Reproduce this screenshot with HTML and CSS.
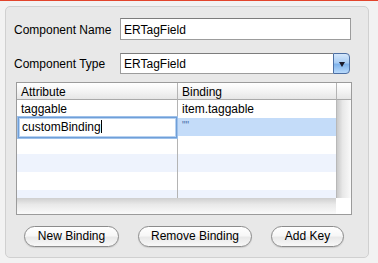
FILE: index.html
```html
<!DOCTYPE html>
<html>
<head>
<meta charset="utf-8">
<link rel="stylesheet" href="styles.css">
</head>
<body>
<div class="redline"></div>
<div class="panel">
  <div class="row">
    <span class="label">Component Name</span>
    <div class="field">ERTagField</div>
  </div>
  <div class="row row2">
    <span class="label">Component Type</span>
    <div class="combo">
      <div class="combo-text">ERTagField</div>
      <div class="combo-btn"><span class="arrow"></span></div>
    </div>
  </div>
  <div class="table">
    <div class="hcell">Attribute</div>
    <div class="hcell">Binding</div>
    <div class="hcell hcorner"></div>
    <div class="rows">
      <div class="trow"><div class="cell c1">taggable</div><div class="cell c2">item.taggable</div></div>
      <div class="trow sel"><div class="cell c1 editcell"><div class="editor">customBinding<span class="caret"></span></div></div><div class="cell c2"><span class="quote">""</span></div></div>
      <div class="trow"><div class="cell c1"></div><div class="cell c2"></div></div>
      <div class="trow alt"><div class="cell c1"></div><div class="cell c2"></div></div>
      <div class="trow"><div class="cell c1"></div><div class="cell c2"></div></div>
      <div class="trow alt short"><div class="cell c1"></div><div class="cell c2"></div></div>
    </div>
    <div class="vscroll"></div>
    <div class="hscroll"></div>
    <div class="corner"></div>
  </div>
  <div class="buttons">
    <div class="btn b1">New Binding</div>
    <div class="btn b2">Remove Binding</div>
    <div class="btn b3">Add Key</div>
  </div>
</div>
</body>
</html>
```
FILE: styles.css
```css
html, body { margin: 0; padding: 0; }
body {
  background: #f2f2f2;
  font-family: "Liberation Sans", Arial, sans-serif;
  font-size: 12px;
  color: #000;
}
.redline { height: 1px; background: #e2442c; }
.panel {
  box-sizing: border-box;
  margin: 5px 0 0 5px;
  width: 364px;
  height: 252px;
  border: 1px solid #d0d0d0;
  border-radius: 5px;
  background: #e8e8e8;
  padding: 11px 0 0 0;
}
.row { display: flex; align-items: center; height: 22px; }
.row2 { margin-top: 13px; height: 21px; }
.label { width: 106px; padding-left: 8px; padding-top: 1px; }
.field {
  box-sizing: border-box;
  width: 231px;
  height: 22px;
  background: #fff;
  border: 1px solid #9c9c9c;
  border-top-color: #7c7c7c;
  padding: 4px 0 0 3px;
  font-size: 12px;
}
.combo { display: flex; width: 230px; height: 21px; }
.combo-text {
  box-sizing: border-box;
  flex: 1;
  background: #fff;
  border: 1px solid #9c9c9c;
  border-top-color: #7c7c7c;
  border-right: none;
  padding: 3px 0 0 3px;
}
.combo-btn {
  box-sizing: border-box;
  width: 17px;
  border: 1px solid #4d6fa3;
  border-radius: 0 4px 4px 0;
  background: linear-gradient(#d5e7fb 0%, #a9cdf4 45%, #7fb3ec 55%, #b9dafb 100%);
  display: flex;
  align-items: center;
  justify-content: center;
}
.arrow {
  width: 0; height: 0;
  border-left: 3.5px solid transparent;
  border-right: 3.5px solid transparent;
  border-top: 5px solid #1a1a2a;
  margin-top: 1px;
}
.table {
  box-sizing: border-box;
  margin: 8px 0 0 10px;
  width: 336px;
  height: 133px;
  border: 1px solid #9b9b9b;
  background: #fff;
  display: grid;
  grid-template-columns: 161px 158px 15px;
  grid-template-rows: 17px 98px 16px;
}
.hcell {
  box-sizing: border-box;
  border-bottom: 1px solid #a9a9a9;
  background: linear-gradient(#ffffff 0%, #f4f4f4 50%, #e6e6e6 100%);
  padding: 2px 0 0 4px;
}
.hcell:first-child { border-right: 1px solid #b4b4b4; }
.hcorner { border-left: 1px solid #b4b4b4; padding: 0; }
.rows { grid-column: 1 / 3; overflow: hidden; }
.trow { display: flex; height: 18px; }
.trow.short { height: 8px; }
.trow.alt { background: #eef3fd; }
.trow.sel { background: #c4dcf9; }
.cell { box-sizing: border-box; padding: 2px 0 0 4px; }
.c1 { width: 161px; border-right: 1px solid #b4b4b4; }
.c2 { width: 158px; }
.editcell { position: relative; padding: 0; }
.editor {
  position: absolute;
  left: 1px; right: 0; top: -1px; bottom: -2px;
  box-sizing: border-box;
  background: #fff;
  border: 1px solid #6f9fd8;
  box-shadow: 0 0 0 1px #9dc0ea, inset 0 0 0 1px #b8d2f1;
  padding: 2px 0 0 3px;
}
.caret {
  display: inline-block;
  width: 1px;
  height: 13px;
  background: #000;
  vertical-align: -2px;
}
.quote { font-size: 10px; color: #4a6ea8; letter-spacing: 0; position: relative; top: -2px; }
.vscroll {
  border-left: 1px solid #b8b8b8;
  background: linear-gradient(to right, #c9c9c9 0%, #e8e8e8 40%, #fafafa 100%);
}
.hscroll {
  grid-column: 1 / 3;
  background: linear-gradient(#cfcfcf 0%, #e9e9e9 40%, #fafafa 100%);
}
.corner { background: #fff; }
.buttons { display: flex; margin: 11px 0 0 18px; gap: 20px; }
.btn {
  box-sizing: border-box;
  height: 21px;
  border: 1px solid #8c8c8c;
  border-radius: 11px;
  background: linear-gradient(#ffffff 0%, #f7f7f7 45%, #e9e9e9 55%, #f8f8f8 100%);
  box-shadow: 0 1px 1px rgba(0,0,0,0.12);
  text-align: center;
  line-height: 19px;
}
.b1 { width: 95px; }
.b2 { width: 114px; margin-left: -1px; }
.b3 { width: 73px; margin-left: -1px; }
```
